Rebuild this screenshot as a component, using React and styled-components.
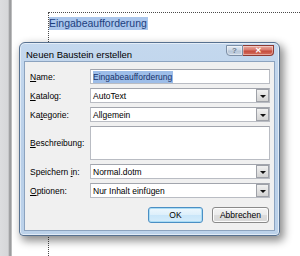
import styled, { createGlobalStyle } from "styled-components"

const Global = createGlobalStyle`
    html, body {
        margin: 0;
        padding: 0;
        background: #fff;
        overflow: hidden;
    }
    body {
        font-family: "Liberation Sans", Arial, sans-serif;
    }
`;

const Screen = styled.div`
    position: relative;
    display: flex;
    width: 300px;
    height: 256px;
    overflow: hidden;
`;

const Gutter = styled.div`
    width: 12px;
    flex: none;
    background: linear-gradient(to right, #dcdddf 0, #d6d7d9 8px, #b4b5b7 9px, #8e8f91 10px, #a9aaac 11px, #d0d0d0 12px);
`;

const Page = styled.div`
    flex: 1;
    background: #fff;
    padding: 12px 0 0 36px;
    display: flex;
`;

const Boundary = styled.div`
    flex: 1;
    border-top: 1px dotted #4a4a4a;
    border-left: 1px dotted #4a4a4a;
    padding-top: 0;
`;

const Selected = styled.span`
    display: inline-block;
    background: #aac6ec;
    color: #1d3f7e;
    font-size: 10.5px;
    line-height: 13px;
    height: 13px;
    padding-right: 1px;
`;

const Window = styled.div`
    position: absolute;
    left: 19px;
    top: 42px;
    width: 261px;
    box-sizing: border-box;
    border: 1px solid #56708f;
    border-radius: 6px 6px 4px 4px;
    background: linear-gradient(#c4d8ee, #b9cfe8 60%, #bcd2ea);
    box-shadow: inset 0 0 0 1px rgba(255, 255, 255, 0.55), 3px 4px 9px 1px rgba(0, 0, 0, 0.45);
    padding: 0 4px 4px 4px;
    display: flex;
    flex-direction: column;
`;

const TitleBar = styled.div`
    height: 18px;
    display: flex;
    align-items: flex-start;
    justify-content: space-between;
`;

const Title = styled.div`
    font-size: 9.5px;
    color: #000;
    padding: 6px 0 0 2px;
    line-height: 11px;
`;

const Caption = styled.div`
    display: flex;
    margin-top: 2px;
    margin-right: 1px;
`;

const CapButton = styled.div`
    width: ${p => p.$w}px;
    height: 11px;
    box-sizing: border-box;
    display: flex;
    align-items: center;
    justify-content: center;
    font-size: 8px;
    font-weight: bold;
    border: 1px solid ${p => p.$close ? "#8d3a32" : "#7c8ea5"};
    border-radius: ${p => p.$close ? "0 0 4px 0" : "0 0 0 4px"};
    border-left: ${p => p.$close ? "none" : undefined};
    background: ${p => p.$close
        ? "linear-gradient(#e9a99f, #d9796c 45%, #c34b3c 55%, #d6705f)"
        : "linear-gradient(#e4ebf3, #cdd8e5 45%, #b7c6d8 55%, #c8d5e4)"};
    color: ${p => p.$close ? "#fff" : "#6f7d8d"};
    box-shadow: inset 0 0 0 1px rgba(255, 255, 255, 0.4);
`;

const Client = styled.div`
    background: #f0f0f0;
    border: 1px solid #8ca3bf;
    padding: 7px 4px 7px 5px;
    display: flex;
    flex-direction: column;
    gap: 4px;
    font-size: 8.5px;
    color: #000;
`;

const Row = styled.div`
    display: grid;
    grid-template-columns: 60px 1fr;
    align-items: center;
`;

const Label = styled.label`
    line-height: 10px;
    u {
        text-decoration: underline;
        text-underline-offset: 1px;
    }
`;

const Field = styled.div`
    position: relative;
    height: ${p => p.$h || 15}px;
    box-sizing: border-box;
    background: #fff;
    border: 1px solid #b9bcc3;
    border-top-color: #a2a5ad;
    display: flex;
    align-items: center;
    padding-left: 2px;
    line-height: 10px;
`;

const Highlight = styled.span`
    background: #9dbde8;
    color: #17336a;
    padding: 1px 1px 1px 0;
`;

const Drop = styled.div`
    position: absolute;
    right: 0px;
    top: 0px;
    bottom: 0px;
    width: 13px;
    box-sizing: border-box;
    border: 1px solid #9ea1a8;
    background: linear-gradient(#f1f1f1, #e2e2e2 50%, #d3d3d3);
    display: flex;
    align-items: center;
    justify-content: center;

    &::after {
        content: "";
        border-left: 3px solid transparent;
        border-right: 3px solid transparent;
        border-top: 3px solid #111;
        margin-top: 1px;
    }
`;

const Buttons = styled.div`
    display: flex;
    justify-content: flex-end;
    gap: 9px;
    margin-top: 5px;
    padding-right: 1px;
`;

const Button = styled.div`
    width: ${p => p.$w}px;
    height: 16px;
    box-sizing: border-box;
    border-radius: 3px;
    display: flex;
    align-items: center;
    justify-content: center;
    font-size: 8.5px;
    border: 1px solid ${p => p.$default ? "#4b8fc4" : "#8a8a8a"};
    background: ${p => p.$default
        ? "linear-gradient(#eef7fd, #dceffb 50%, #c9e6f9 51%, #d5ecfb)"
        : "linear-gradient(#f4f4f4, #ebebeb 50%, #dcdcdc 51%, #d8d8d8)"};
    box-shadow: inset 0 0 0 1px ${p => p.$default ? "#a9dcf5" : "#fcfcfc"};
`;

export default function App() {
    return (
        <>
            <Global />
            <Screen>
                <Gutter />
                <Page>
                    <Boundary>
                        <Selected>Eingabeaufforderung</Selected>
                    </Boundary>
                </Page>

                <Window>
                    <TitleBar>
                        <Title>Neuen Baustein erstellen</Title>
                        <Caption>
                            <CapButton $w={17}>?</CapButton>
                            <CapButton $w={31} $close>✕</CapButton>
                        </Caption>
                    </TitleBar>
                    <Client>
                        <Row>
                            <Label><u>N</u>ame:</Label>
                            <Field><Highlight>Eingabeaufforderung</Highlight></Field>
                        </Row>
                        <Row>
                            <Label><u>K</u>atalog:</Label>
                            <Field>AutoText<Drop /></Field>
                        </Row>
                        <Row>
                            <Label>Ka<u>t</u>egorie:</Label>
                            <Field>Allgemein<Drop /></Field>
                        </Row>
                        <Row>
                            <Label><u>B</u>eschreibung:</Label>
                            <Field $h={34} />
                        </Row>
                        <Row>
                            <Label>Speichern <u>i</u>n:</Label>
                            <Field>Normal.dotm<Drop /></Field>
                        </Row>
                        <Row>
                            <Label><u>O</u>ptionen:</Label>
                            <Field>Nur Inhalt einfügen<Drop /></Field>
                        </Row>
                        <Buttons>
                            <Button $w={55} $default>OK</Button>
                            <Button $w={57}>Abbrechen</Button>
                        </Buttons>
                    </Client>
                </Window>
            </Screen>
        </>
    )
}
